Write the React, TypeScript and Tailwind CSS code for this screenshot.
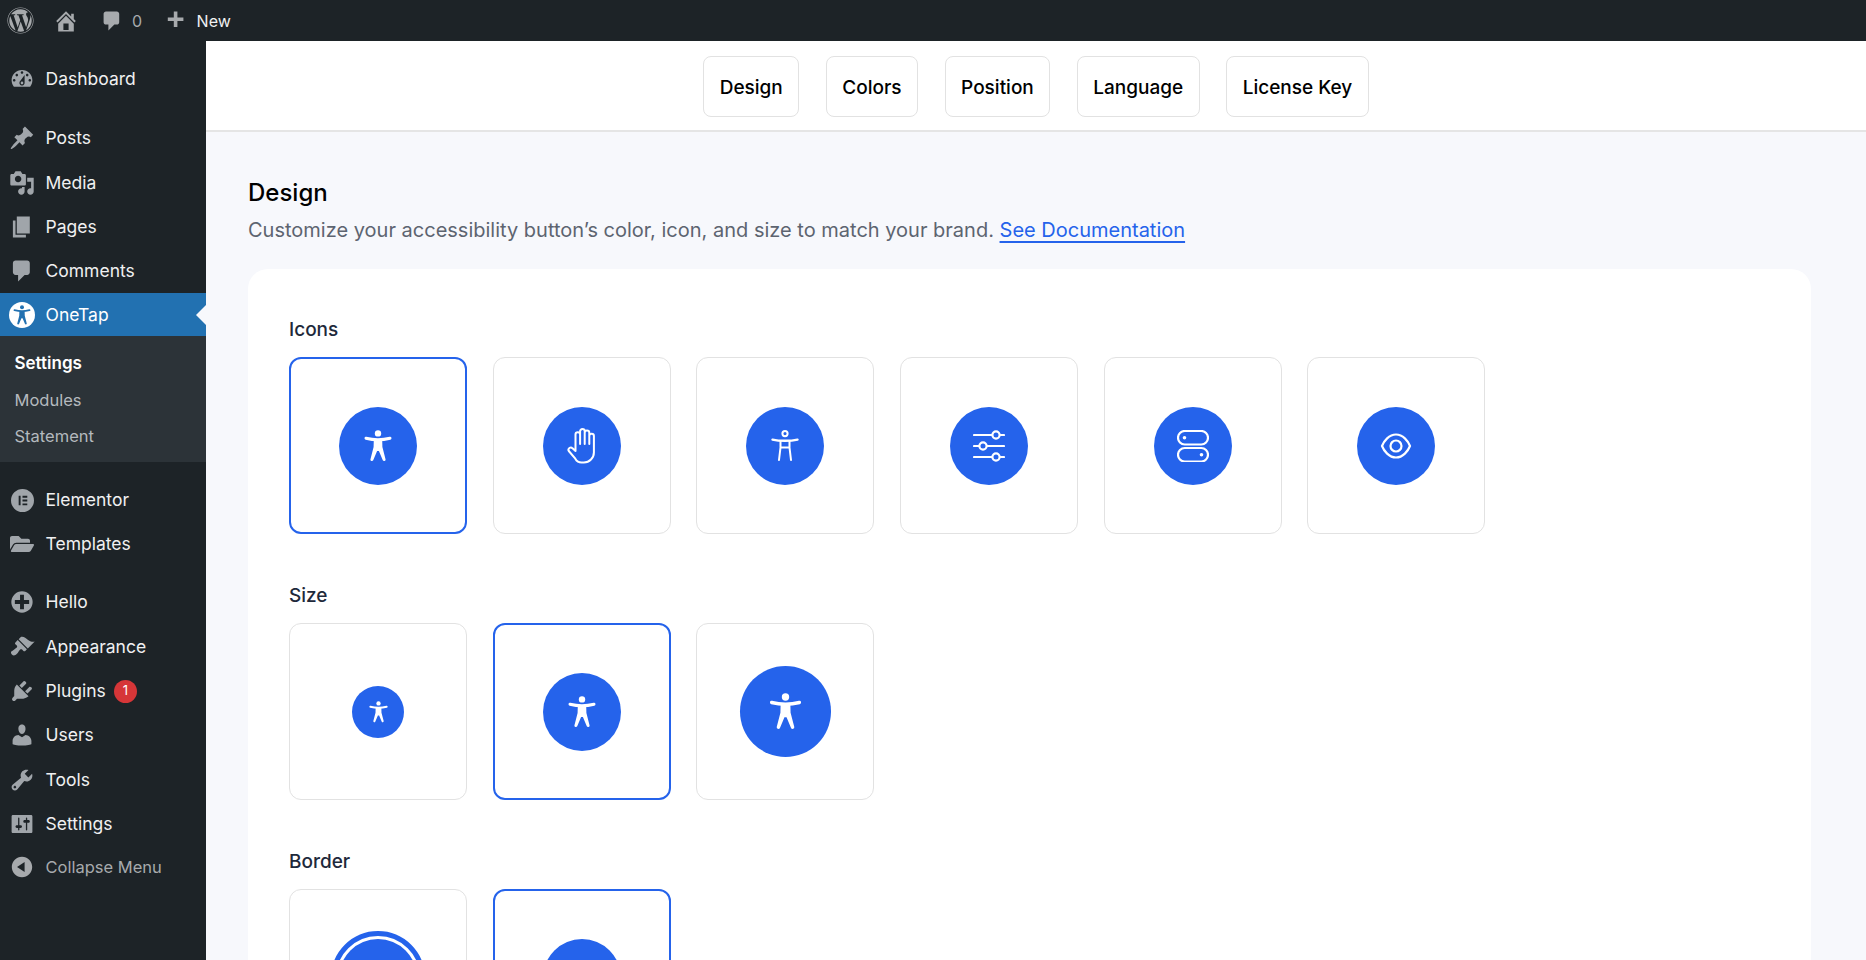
import { FaWordpress, FaFolderOpen } from 'react-icons/fa';
import type { ReactNode } from 'react';

// dashicons, 20x20
const dash: Record<string, string> = {
  dashboard: 'M3.76 16h12.48c1.1-1.37 1.76-3.11 1.76-5 0-4.42-3.58-8-8-8s-8 3.58-8 8c0 1.89.66 3.63 1.76 5zM10 4c.55 0 1 .45 1 1s-.45 1-1 1-1-.45-1-1 .45-1 1-1zM6 6c.55 0 1 .45 1 1s-.45 1-1 1-1-.45-1-1 .45-1 1-1zm8 0c.55 0 1 .45 1 1s-.45 1-1 1-1-.45-1-1 .45-1 1-1zm-5.37 5.55L12 7v6c0 1.1-.9 2-2 2s-2-.9-2-2c0-.57.24-1.08.63-1.45zM4 10c.55 0 1 .45 1 1s-.45 1-1 1-1-.45-1-1 .45-1 1-1zm12 0c.55 0 1 .45 1 1s-.45 1-1 1-1-.45-1-1 .45-1 1-1zm-5 3c0-.55-.45-1-1-1s-1 .45-1 1 .45 1 1 1 1-.45 1-1z',
  post: 'M10.44 3.02l1.82-1.82 6.36 6.35-1.83 1.82c-1.05-.68-2.48-.57-3.41.36l-.75.75c-.92.93-1.04 2.35-.35 3.41l-1.83 1.82-2.41-2.41-2.8 2.79c-.42.42-3.38 2.71-3.8 2.29s1.86-3.39 2.28-3.81l2.79-2.79L4.1 9.36l1.83-1.82c1.05.69 2.48.57 3.4-.36l.75-.75c.93-.92 1.05-2.35.36-3.41z',
  media: 'M13 11V4c0-.55-.45-1-1-1h-1.67L9 1H5L3.67 3H2c-.55 0-1 .45-1 1v7c0 .55.45 1 1 1h10c.55 0 1-.45 1-1zM7 4.5c1.38 0 2.5 1.12 2.5 2.5S8.38 9.5 7 9.5 4.5 8.38 4.5 7 5.62 4.5 7 4.5zM14 6h5v10.5c0 1.38-1.12 2.5-2.5 2.5S14 17.88 14 16.5s1.12-2.5 2.5-2.5c.17 0 .34.02.5.05V9h-3V6zm-4 8.05V13h2v3.5c0 1.38-1.12 2.5-2.5 2.5S7 17.88 7 16.5 8.12 14 9.5 14c.17 0 .34.02.5.05z',
  page: 'M6 15V2h10v13H6zm-1 1h8v2H3V5h2v11z',
  comment: 'M5 2h9c1.1 0 2 .9 2 2v7c0 1.1-.9 2-2 2h-2l-5 5v-5H5c-1.1 0-2-.9-2-2V4c0-1.1.9-2 2-2z',
  home: 'M16 8.5l1.53 1.53-1.06 1.06L10 4.62l-6.47 6.47-1.06-1.06L10 2.5l4 4v-2h2v4zm-6-2.46l6 5.99V18H4v-5.97zM12 17v-5H8v5h4z',
  plugin: 'M13.11 4.36L9.87 7.6 8 5.73l3.24-3.24c.35-.34 1.05-.2 1.56.32.52.51.66 1.21.31 1.55zm-8 1.77l.91-1.12 9.01 9.01-1.19.84c-.71.71-2.63 1.16-3.82 1.16H6.14L4.9 17.26c-.59.59-1.54.59-2.12 0-.59-.58-.59-1.53 0-2.12l1.24-1.24v-3.88c0-1.13.4-3.19 1.09-3.89zm7.26 3.97l3.24-3.24c.34-.35 1.04-.21 1.55.31.52.51.66 1.21.31 1.55l-3.24 3.25z',
  users: 'M10 9.25c-2.27 0-2.73-3.44-2.73-3.44C7 4.02 7.82 2 9.97 2c2.16 0 2.98 2.02 2.71 3.81 0 0-.41 3.44-2.68 3.44zm0 2.57L12.72 10c2.39 0 4.52 2.33 4.52 4.53v2.49s-3.65 1.13-7.24 1.13c-3.65 0-7.24-1.13-7.24-1.13v-2.49c0-2.25 1.94-4.48 4.47-4.48z',
  tools: 'M16.68 9.77c-1.34 1.34-3.3 1.67-4.95.99l-5.41 6.52c-.99.99-2.59.99-3.58 0s-.99-2.59 0-3.57l6.52-5.42c-.68-1.65-.35-3.61.99-4.95 1.28-1.28 3.12-1.62 4.72-1.06l-2.89 2.89 2.82 2.82 2.86-2.87c.53 1.58.18 3.39-1.08 4.65zM3.81 16.21c.4.39 1.04.39 1.43 0 .4-.4.4-1.04 0-1.43-.39-.4-1.03-.4-1.43 0-.39.39-.39 1.03 0 1.43z',
  settings: 'M18 16V4c0-.55-.45-1-1-1H3c-.55 0-1 .45-1 1v12c0 .55.45 1 1 1h14c.55 0 1-.45 1-1zM8 11h1c.55 0 1 .45 1 1s-.45 1-1 1H8v1.5c0 .28-.22.5-.5.5s-.5-.22-.5-.5V13H6c-.55 0-1-.45-1-1s.45-1 1-1h1V5.5c0-.28.22-.5.5-.5s.5.22.5.5V11zm5-2h-1c-.55 0-1-.45-1-1s.45-1 1-1h1V5.5c0-.28.22-.5.5-.5s.5.22.5.5V7h1c.55 0 1 .45 1 1s-.45 1-1 1h-1v5.5c0 .28-.22.5-.5.5s-.5-.22-.5-.5V9z',
  appearance: 'M14.48 11.06L7.41 3.99l1.5-1.5c.5-.56 2.3-.47 3.51.32 1.21.8 1.43 1.28 2.91 2.1 1.18.64 2.45 1.26 4.45.85zm-.71.71L6.7 4.7 4.93 6.47c-.39.39-.39 1.02 0 1.41l1.06 1.06c.39.39.39 1.03 0 1.42-.6.6-1.43 1.11-2.21 1.69-.35.26-.7.53-1.01.84C1.43 13.23 1 14.6 2.2 15.8c1.2 1.2 2.57.77 3.91-.57.31-.31.58-.66.84-1.01.58-.78 1.09-1.61 1.69-2.21.39-.39 1.03-.39 1.42 0l1.06 1.06c.39.39 1.02.39 1.41 0z',
  plus: 'M15.8 4.2c3.2 3.21 3.2 8.39 0 11.6-3.21 3.2-8.39 3.2-11.6 0C1 12.59 1 7.41 4.2 4.2 7.41 1 12.59 1 15.8 4.2zm-4.3 11.3v-4h4v-3h-4v-4h-3v4h-4v3h4v4h3z',
  collapse: 'M10 2.16c4.33 0 7.84 3.51 7.84 7.84s-3.51 7.84-7.84 7.84S2.16 14.33 2.16 10 5.71 2.16 10 2.16zm2 11.72V6.12L6.18 9.97z',
  add: 'M17 7v3h-5v5H9v-5H4V7h5V2h3v5h5z',
};

function Dash({ name, className }: { name: string; className?: string }) {
  return (
    <svg viewBox="0 0 20 20" fill="currentColor" className={className}>
      <path d={dash[name]} />
    </svg>
  );
}

function ElementorIcon({ className }: { className?: string }) {
  return (
    <svg viewBox="0 0 24 24" fill="currentColor" className={className}>
      <path
        fillRule="evenodd"
        d="M12 0a12 12 0 1 0 0 24 12 12 0 0 0 0-24zM8 7h2v10H8zm4 0h5v2h-5zm0 4h5v2h-5zm0 4h5v2h-5z"
      />
    </svg>
  );
}

function Person({ className }: { className?: string }) {
  return (
    <svg viewBox="0 0 28 32" fill="currentColor" className={className}>
      <circle cx="14" cy="3.4" r="3.2" />
      <path d="M2 8.2c4 1 8 1.5 12 1.5s8-.5 12-1.5" fill="none" stroke="currentColor" strokeWidth="3" strokeLinecap="round" />
      <path d="M9.8 9.5h8.4l.2 7.5 3.2 12.4a1.5 1.5 0 0 1-2.8.9L14.9 21h-1.8l-3.9 9.3a1.5 1.5 0 0 1-2.8-.9L9.6 17z" />
    </svg>
  );
}

function PersonOutline({ className }: { className?: string }) {
  return (
    <svg viewBox="0 0 28 32" fill="none" stroke="currentColor" strokeWidth="2" strokeLinecap="round" className={className}>
      <circle cx="14" cy="3.6" r="2.6" />
      <path d="M1.500 9.600c4 .9 8 1.200 12.500 1.200s8.500-.3 12.500-1.200" strokeWidth="2.400" />
      <path d="M9.500 11v6.500L8 30M18.500 11v6.500L20 30M9.500 17.500h9" />
    </svg>
  );
}

function HandIcon({ className }: { className?: string }) {
  return (
    <svg viewBox="0 0 29 36" fill="none" stroke="currentColor" strokeWidth="2" strokeLinecap="round" strokeLinejoin="round" className={className}>
      <path d="M8.500 23V6.500a2.300 2.300 0 0 1 4.600 0V16M13.100 16V3.300a2.300 2.300 0 0 1 4.600 0V16M17.700 16V4.800a2.300 2.300 0 0 1 4.600 0V16M22.300 16V8a2.300 2.300 0 0 1 4.600 0v16.500a10 10 0 0 1-10 10h-2.400c-3 0-4.800-1.300-6.200-3.800L1.800 23a2.300 2.300 0 0 1 3.700-2.700L8.500 23" />
    </svg>
  );
}

function Sliders({ className }: { className?: string }) {
  return (
    <svg viewBox="0 0 32 32" fill="none" stroke="currentColor" strokeWidth="2.200" strokeLinecap="round" className={className}>
      <path d="M1 5h18M27 5h4M1 16h5M14 16h17M1 27h18M27 27h4" />
      <circle cx="23" cy="5" r="3.600" />
      <circle cx="10" cy="16" r="3.600" />
      <circle cx="23" cy="27" r="3.600" />
    </svg>
  );
}

function Toggles({ className }: { className?: string }) {
  return (
    <svg viewBox="0 0 32 32" fill="none" stroke="currentColor" strokeWidth="2.200" className={className}>
      <rect x="1" y="1" width="30" height="13.500" rx="6.700" />
      <rect x="1" y="18" width="30" height="13.500" rx="6.700" />
      <circle cx="7.500" cy="7.700" r="1.800" fill="currentColor" stroke="none" />
      <circle cx="24.500" cy="24.700" r="1.800" fill="currentColor" stroke="none" />
    </svg>
  );
}

function Eye({ className }: { className?: string }) {
  return (
    <svg viewBox="0 0 32 26" fill="none" stroke="currentColor" strokeWidth="2.200" strokeLinejoin="round" className={className}>
      <path d="M2 13C4 8 9 1.500 16 1.500S28 8 30 13C28 18 23 24.500 16 24.500S4 18 2 13z" />
      <circle cx="16" cy="13" r="5.500" />
    </svg>
  );
}

type MenuRow = { label: string; icon: ReactNode; badge?: string };

const iconCls = 'w-[26px] h-[26px] text-[#a0a5aa]';

const groups: MenuRow[][] = [
  [{ label: 'Dashboard', icon: <Dash name="dashboard" className={iconCls} /> }],
  [
    { label: 'Posts', icon: <Dash name="post" className={iconCls} /> },
    { label: 'Media', icon: <Dash name="media" className={iconCls} /> },
    { label: 'Pages', icon: <Dash name="page" className={iconCls} /> },
    { label: 'Comments', icon: <Dash name="comment" className={iconCls} /> },
  ],
];

function Row({ row }: { row: MenuRow }) {
  return (
    <div className="flex items-center h-[44.3px] text-[17.500px] text-[#f0f0f1]">
      <span className="w-[44px] mr-[1.500px] shrink-0 flex justify-center">{row.icon}</span>
      <span>{row.label}</span>
      {row.badge && (
        <span className="ml-2 w-[23px] h-[23px] rounded-full bg-[#d63638] text-white text-[13px] flex items-center justify-center">
          {row.badge}
        </span>
      )}
    </div>
  );
}

function Sidebar() {
  return (
    <aside className="w-[206px] shrink-0 bg-[#1d2327] pt-[16px]">
      {groups.map((g, i) => (
        <div key={i} className={i === 0 ? 'mb-[15px]' : ''}>
          {g.map((r) => <Row key={r.label} row={r} />)}
        </div>
      ))}
      <div className="relative flex items-center h-[43px] bg-[#2271b1] text-[17.500px] text-white">
        <span className="w-[44px] mr-[1.500px] shrink-0 flex justify-center">
          <span className="w-[26px] h-[26px] rounded-full bg-white flex items-center justify-center text-[#2271b1]">
            <Person className="w-[18px] h-[20px]" />
          </span>
        </span>
        <span>OneTap</span>
        <span className="absolute right-0 top-1/2 -translate-y-1/2 border-y-[10px] border-r-[10px] border-y-transparent border-r-[#f7f8fc]" />
      </div>
      <div className="bg-[#2c3338] pt-[9.200px] pb-[8px] pl-[14.500px] mb-[15.700px] text-[16.500px]">
        <div className="h-[36.200px] flex items-center text-[17px] font-semibold text-white">Settings</div>
        <div className="h-[36.200px] flex items-center text-[#b4b9be]">Modules</div>
        <div className="h-[36.200px] flex items-center text-[#b4b9be]">Statement</div>
      </div>
      <div className="mb-[13.800px]">
        <Row row={{ label: 'Elementor', icon: <ElementorIcon className="w-[23px] h-[23px] text-[#a0a5aa]" /> }} />
        <Row row={{ label: 'Templates', icon: <FaFolderOpen className="w-6 h-6 text-[#a0a5aa]" /> }} />
      </div>
      <Row row={{ label: 'Hello', icon: <Dash name="plus" className={iconCls} /> }} />
      <Row row={{ label: 'Appearance', icon: <Dash name="appearance" className={iconCls} /> }} />
      <Row row={{ label: 'Plugins', icon: <Dash name="plugin" className={iconCls} />, badge: '1' }} />
      <Row row={{ label: 'Users', icon: <Dash name="users" className={iconCls} /> }} />
      <Row row={{ label: 'Tools', icon: <Dash name="tools" className={iconCls} /> }} />
      <Row row={{ label: 'Settings', icon: <Dash name="settings" className={iconCls} /> }} />
      <div className="flex items-center h-[42px] text-[16.500px] text-[#a7aaad]">
        <span className="w-[44px] mr-[1.500px] shrink-0 flex justify-center">
          <Dash name="collapse" className="w-[26px] h-[26px] text-[#a7aaad]" />
        </span>
        <span>Collapse Menu</span>
      </div>
    </aside>
  );
}

function TopBar() {
  return (
    <header className="h-[41px] shrink-0 bg-[#1d2327] flex items-center text-[16px] text-[#f0f0f1]">
      <FaWordpress className="ml-[6.500px] w-[27px] h-[27px] text-[#a7aaad]" />
      <Dash name="home" className="ml-[19.500px] w-[26px] h-[26px] text-[#a7aaad]" />
      <Dash name="comment" className="ml-[21px] w-[24px] h-[24px] text-[#a7aaad]" />
      <span className="ml-[8px] text-[#a7aaad]">0</span>
      <Dash name="add" className="ml-[21px] w-[24px] h-[24px] text-[#a7aaad]" />
      <span className="ml-[9.500px]">New</span>
    </header>
  );
}

function OptionCard({ selected, children }: { selected?: boolean; children: ReactNode }) {
  return (
    <div
      className={
        selected
          ? 'w-[178px] h-[177px] rounded-xl bg-white flex items-center justify-center border-[2.300px] border-[#2563eb]'
          : 'w-[178px] h-[177px] rounded-xl bg-white flex items-center justify-center border-[1.700px] border-[#e2e2e2]'
      }
    >
      {children}
    </div>
  );
}

function Circle({ children, className }: { children?: ReactNode; className: string }) {
  return (
    <div className={`rounded-full bg-[#2563eb] text-white flex items-center justify-center shrink-0 ${className}`}>
      {children}
    </div>
  );
}

function Section({ title, children }: { title: string; children: ReactNode }) {
  return (
    <section>
      <h3 className="h-[28px] leading-[30px] text-[19px] font-medium text-[#1e293b] mb-[14px]">{title}</h3>
      <div className="flex gap-[25.700px]">{children}</div>
    </section>
  );
}

const tabs = ['Design', 'Colors', 'Position', 'Language', 'License Key'];

export default function App() {
  const figure = <Person className="w-[28px] h-[32px]" />;
  return (
    <div className="w-[1866px] h-[960px] overflow-hidden flex flex-col [font-family:Inter,sans-serif]">
      <TopBar />
      <div className="flex flex-1 min-h-0">
        <Sidebar />
        <main className="flex-1 min-w-0 bg-[#f7f8fc] flex flex-col">
          <nav className="h-[91px] shrink-0 pt-[2px] bg-white border-b-2 border-[#e5e5e5] flex items-center justify-center gap-[26.500px]">
            {tabs.map((t) => (
              <div
                key={t}
                className="h-[61px] px-[15.500px] pt-[3px] flex items-center rounded-lg border-[1.700px] border-[#e2e2e2] bg-white text-[19px] font-medium text-black"
              >
                {t}
              </div>
            ))}
          </nav>
          <div className="flex-1 min-h-0 pl-[42px] pr-[55px] pt-[46px]">
            <h2 className="h-[30px] leading-[30px] text-[24px] font-medium text-black">Design</h2>
            <p className="mt-[7px] h-[30px] leading-[30px] text-[20px] text-[#5d6470]">
              Customize your accessibility button’s color, icon, and size to match your brand.{' '}
              <a className="text-[#2563eb] underline underline-offset-4">See Documentation</a>
            </p>
            <div className="mt-[24px] bg-white rounded-[20px] pl-[41px] pt-[46px] pb-10 flex flex-col gap-[47px]">
              <Section title="Icons">
                <OptionCard selected><Circle className="w-[78px] h-[78px]">{figure}</Circle></OptionCard>
                <OptionCard><Circle className="w-[78px] h-[78px]"><HandIcon className="w-[29px] h-[36px]" /></Circle></OptionCard>
                <OptionCard><Circle className="w-[78px] h-[78px]"><PersonOutline className="w-[28px] h-[32px]" /></Circle></OptionCard>
                <OptionCard><Circle className="w-[78px] h-[78px]"><Sliders className="w-[32px] h-[32px]" /></Circle></OptionCard>
                <OptionCard><Circle className="w-[78px] h-[78px]"><Toggles className="w-[32px] h-[32px]" /></Circle></OptionCard>
                <OptionCard><Circle className="w-[78px] h-[78px]"><Eye className="w-[32px] h-[26px]" /></Circle></OptionCard>
              </Section>
              <Section title="Size">
                <OptionCard><Circle className="w-[52px] h-[52px]"><Person className="w-[19px] h-[22px]" /></Circle></OptionCard>
                <OptionCard selected><Circle className="w-[78px] h-[78px]">{figure}</Circle></OptionCard>
                <OptionCard><Circle className="w-[91px] h-[91px]"><Person className="w-[33px] h-[37px]" /></Circle></OptionCard>
              </Section>
              <Section title="Border">
                <OptionCard>
                  <div className="w-[94px] h-[94px] rounded-full border-[5px] border-[#2563eb] p-[3px] shrink-0">
                    <Circle className="w-full h-full">{figure}</Circle>
                  </div>
                </OptionCard>
                <OptionCard selected><Circle className="w-[78px] h-[78px]">{figure}</Circle></OptionCard>
              </Section>
            </div>
          </div>
        </main>
      </div>
    </div>
  );
}
